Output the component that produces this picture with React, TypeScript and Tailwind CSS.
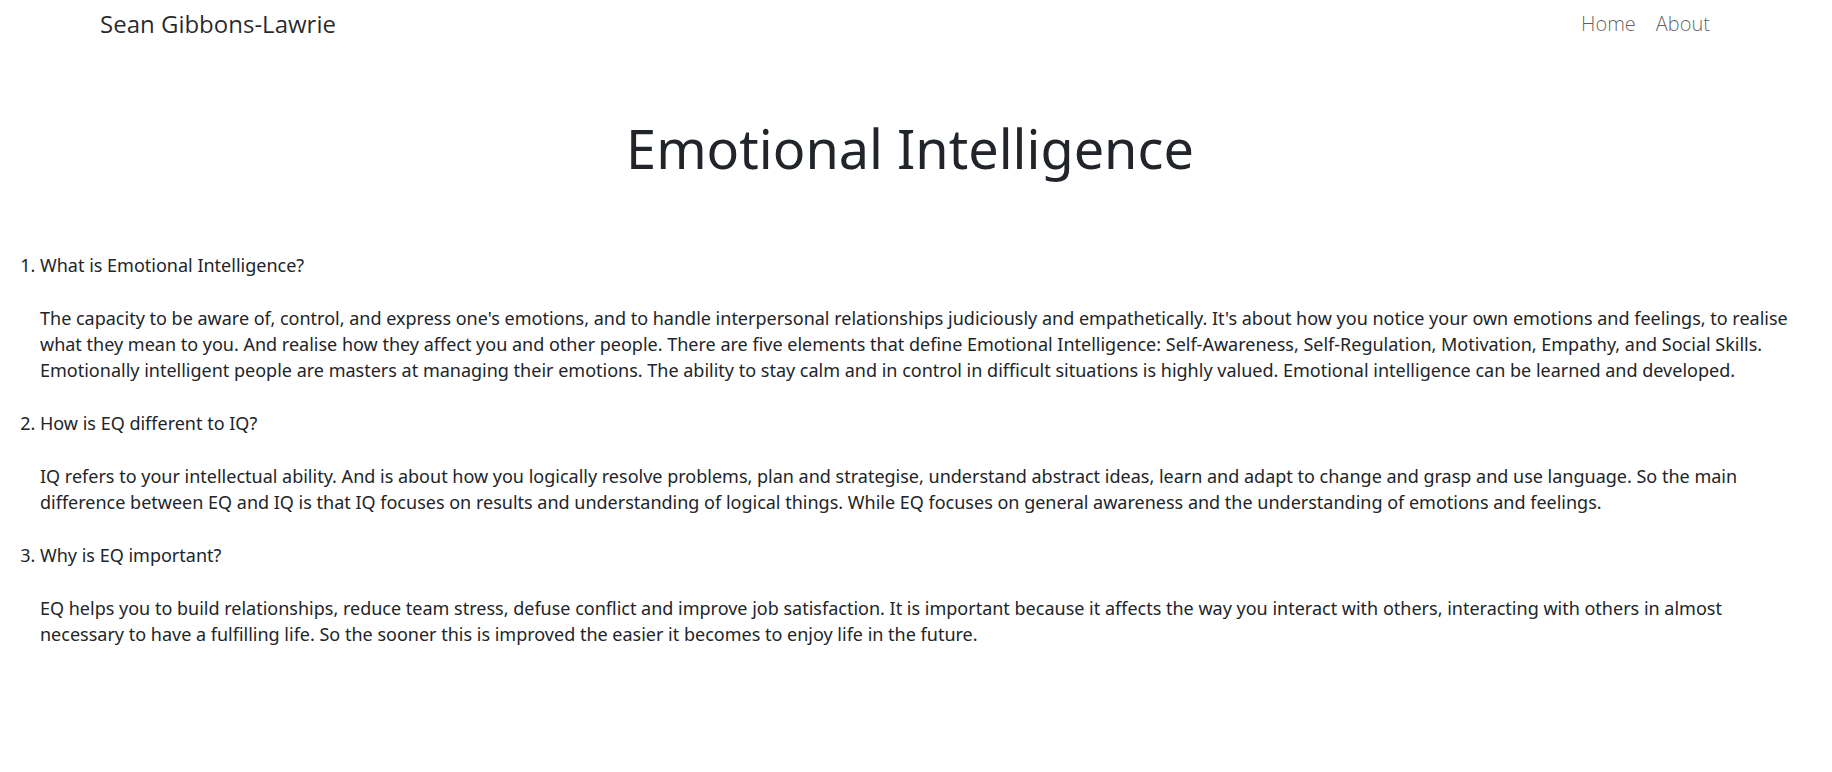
const items = [
  {
    question: "What is Emotional Intelligence?",
    answer:
      "The capacity to be aware of, control, and express one's emotions, and to handle interpersonal relationships judiciously and empathetically. It's about how you notice your own emotions and feelings, to realise what they mean to you. And realise how they affect you and other people. There are five elements that define Emotional Intelligence: Self-Awareness, Self-Regulation, Motivation, Empathy, and Social Skills. Emotionally intelligent people are masters at managing their emotions. The ability to stay calm and in control in difficult situations is highly valued. Emotional intelligence can be learned and developed.",
  },
  {
    question: "How is EQ different to IQ?",
    answer:
      "IQ refers to your intellectual ability. And is about how you logically resolve problems, plan and strategise, understand abstract ideas, learn and adapt to change and grasp and use language. So the main difference between EQ and IQ is that IQ focuses on results and understanding of logical things. While EQ focuses on general awareness and the understanding of emotions and feelings.",
  },
  {
    question: "Why is EQ important?",
    answer:
      "EQ helps you to build relationships, reduce team stress, defuse conflict and improve job satisfaction. It is important because it affects the way you interact with others, interacting with others in almost necessary to have a fulfilling life. So the sooner this is improved the easier it becomes to enjoy life in the future.",
  },
];

export default function App() {
  return (
    <div className="bg-white pr-3 text-[#212529]">
      <nav className="flex items-center justify-between pr-[110px] pl-[100px] py-1 font-['Open_Sans',sans-serif]">
        <a href="#" className="text-2xl leading-10 text-black/85">Sean Gibbons-Lawrie</a>
        <div className="flex gap-5 text-xl leading-10 font-light text-black/65">
          <a href="#">Home</a>
          <a href="#">About</a>
        </div>
      </nav>
      <main className="font-['Noto_Sans',sans-serif]">
        <h1 className="mt-[67px] text-center text-[54px] leading-[66px]">Emotional Intelligence</h1>
        <ol className="mt-[71px] list-decimal pl-10 pr-5 text-lg leading-[26px]">
          {items.map((item) => (
            <li key={item.question} className="mb-[27px]">
              <h2>{item.question}</h2>
              <p className="mt-[27px]">{item.answer}</p>
            </li>
          ))}
        </ol>
      </main>
    </div>
  );
}
